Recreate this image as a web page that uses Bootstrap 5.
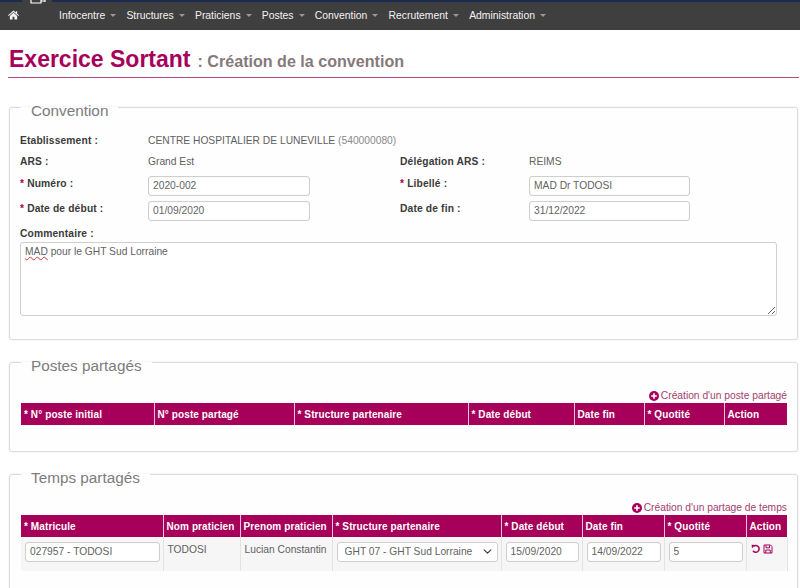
<!DOCTYPE html>
<html lang="fr"><head><meta charset="utf-8"><title>Exercice Sortant</title>
<link rel="stylesheet" href="https://cdn.jsdelivr.net/npm/bootstrap@5.3.0/dist/css/bootstrap.min.css">
<style>
html,body{height:588px;overflow:hidden}
body{font-family:"Liberation Sans",Arial,sans-serif;font-size:10.25px;color:#5f5f5f;background:#fff;line-height:1.3}
.topbar{height:30px;background:#3f3f3f;border-top:2px solid #1c2a52;position:relative;padding-left:8px;display:flex;align-items:center;color:#eee;font-size:10.4px}
.topnotch{position:absolute;left:22px;top:-2px;width:30px;height:2px;background:#3f3f3f}
.topicon{position:absolute;left:30px;top:-2px;display:block}
.homei{display:block;margin:0 40px 2px 0}
.menuitem{color:#f2f2f2;text-decoration:none;margin-right:10.2px;white-space:nowrap}
.menuitem::after{content:"";display:inline-block;margin-left:5px;vertical-align:2px;border-top:3px solid #999;border-left:3px solid transparent;border-right:3px solid transparent}
.pagehead{margin:14px 1px 0 8px;height:34px;border-bottom:1px solid #b5497f;display:flex;align-items:baseline;padding:0 0 0 1px}
.pagehead h1{font-size:23px;font-weight:700;color:#a6005a;margin:0;line-height:30px}
.pagehead small{font-size:16.1px;font-weight:700;color:#85797b;margin-left:7px}
.bloc{margin:11px 2px 0 9px;padding:0 11px;border:1px solid #dcdcdc;border-radius:3px;box-shadow:0 0 2px #e0e0e0;background:#fefefe;min-width:0}
.bloc legend{float:none;width:auto;font-size:15.3px;font-weight:400;color:#7c7c7c;margin:0;padding:6px 10px 0;line-height:17px}
.bloc1{height:244px;margin-top:18px}
.bloc2{height:101px}
.bloc3{height:140px}
.formgrid{display:grid;grid-template-columns:128px 252px 129px 161px;margin:15px 0 0 -1px;align-items:start}
.fl{font-weight:700;color:#3a3a3a;letter-spacing:.15px;white-space:nowrap}
.rowa{height:21px}.rowb{height:21px}.rowc{height:25px}.rowd{height:26px}
.pad{padding-top:1px}
.fv{white-space:nowrap}
.mut{color:#888}
.req{color:#a6005a}
.fi{display:block;width:161px;height:19.5px;padding:1px 4px;font-size:10.25px;line-height:15px;color:#626262;border:1px solid #cfcfcf;border-radius:3px;box-shadow:inset 0 0 1px #ddd;min-height:0}
.fileft{width:162px}
.cl{margin-left:-1px}
.comm{display:block;height:74px;width:757px;margin:2px 0 0 -1px;padding:2px 4px;font-size:10.25px;line-height:13px;color:#626262;border:1px solid #cfcfcf;border-radius:3px;resize:vertical;overflow:auto;min-height:0}
.wavy{text-decoration:underline wavy #c33;text-decoration-thickness:1px}
.addlink{color:#a2416f;height:15px;line-height:15px;margin:14px -1px 0 0;white-space:nowrap;display:flex;justify-content:flex-end;align-items:center;gap:2px}
.addlink svg{display:block}
.grille{table-layout:fixed;width:766px;margin:0;border-collapse:collapse;--bs-table-bg:transparent}
.grille th{background:#a6005a;color:#fff;font-weight:700;font-size:10px;height:22px;padding:0 3px;border:0;border-right:1px solid #e9c6d8;white-space:nowrap;vertical-align:middle;letter-spacing:.1px}
.grille th:last-child{border-right:0}
.grille td{background:#f6f6f6;padding:5px 3px 0 4px;height:34px;vertical-align:top;border:0;border-right:1px solid #e3e3e3;color:#5f5f5f;white-space:nowrap;overflow:hidden;font-size:10.25px;box-shadow:none}
.grille .fi,.grille .fs{width:100%}
.grille td.tx{padding:6px 3px 0 4px}
.fs{display:block;height:19.5px;padding:1px 18px 1px 7px;font-size:10.25px;line-height:15px;color:#626262;border:1px solid #cfcfcf;border-radius:3px;min-height:0;background-size:9px;background-position:right 5px center}
.acts{display:flex;gap:2px;padding-top:2px}
.p1{width:133px}.p2{width:140px}.p3{width:174px}.p4{width:106px}.p5{width:70px}.p6{width:80px}.p7{width:63px}
.q1{width:142px}.q2{width:77px}.q3{width:92px}.q4{width:169px}.q5{width:81px}.q6{width:82px}.q7{width:82px}.q8{width:41px}
</style></head><body>
<nav class="topbar">
<span class="topnotch"></span>
<svg class="topicon" width="16" height="4" viewBox="0 0 16 4"><path d="M1 0v3h10V0M11 1h4M15 0v2" fill="none" stroke="#fff" stroke-width="1.2"/></svg>
<svg class="homei" width="11" height="10" viewBox="0 0 12 10"><path d="M6 0 0 5.200l.7.8L6 1.600 11.300 6l.7-.8-2-1.700V.8H8.500v1.400zM2 6v4h3V7h2v3h3V6L6 2.600z" fill="#f2f2f2"/></svg>
<a class="menuitem" href="#">Infocentre</a>
<a class="menuitem" href="#">Structures</a>
<a class="menuitem" href="#">Praticiens</a>
<a class="menuitem" href="#">Postes</a>
<a class="menuitem" href="#">Convention</a>
<a class="menuitem" href="#">Recrutement</a>
<a class="menuitem" href="#">Administration</a>
</nav>
<header class="pagehead"><h1>Exercice Sortant</h1><small>: Création de la convention</small></header>

<fieldset class="bloc bloc1"><legend>Convention</legend>
<div class="formgrid">
<div class="fl rowa">Etablissement :</div><div class="fv">CENTRE HOSPITALIER DE LUNEVILLE <span class="mut">(540000080)</span></div><div></div><div></div>
<div class="fl rowb">ARS :</div><div class="fv">Grand Est</div><div class="fl">Délégation ARS :</div><div class="fv">REIMS</div>
<div class="fl rowc pad"><span class="req">*</span> Numéro :</div><div><input class="form-control fi fileft" value="2020-002"></div><div class="fl pad"><span class="req">*</span> Libellé :</div><div><input class="form-control fi" value="MAD Dr TODOSI"></div>
<div class="fl rowd pad"><span class="req">*</span> Date de début :</div><div><input class="form-control fi fileft" value="01/09/2020"></div><div class="fl pad">Date de fin :</div><div><input class="form-control fi" value="31/12/2022"></div>
</div>
<div class="fl cl">Commentaire :</div>
<div class="form-control comm"><span class="wavy">MAD</span> pour le GHT Sud Lorraine</div>
</fieldset>

<fieldset class="bloc bloc2"><legend>Postes partagés</legend>
<div class="addlink"><svg width="10" height="10" viewBox="0 0 10 10"><circle cx="5" cy="5" r="5" fill="#a6005a"/><path d="M5 2.200v5.600M2.200 5h5.600" stroke="#fff" stroke-width="1.600"/></svg>Création d'un poste partagé</div>
<table class="table grille t1"><colgroup><col class="p1"><col class="p2"><col class="p3"><col class="p4"><col class="p5"><col class="p6"><col class="p7"></colgroup>
<thead><tr><th>* N° poste initial</th><th>N° poste partagé</th><th>* Structure partenaire</th><th>* Date début</th><th>Date fin</th><th>* Quotité</th><th>Action</th></tr></thead></table>
</fieldset>

<fieldset class="bloc bloc3"><legend>Temps partagés</legend>
<div class="addlink"><svg width="10" height="10" viewBox="0 0 10 10"><circle cx="5" cy="5" r="5" fill="#a6005a"/><path d="M5 2.200v5.600M2.200 5h5.600" stroke="#fff" stroke-width="1.600"/></svg>Création d'un partage de temps</div>
<table class="table grille t2"><colgroup><col class="q1"><col class="q2"><col class="q3"><col class="q4"><col class="q5"><col class="q6"><col class="q7"><col class="q8"></colgroup>
<thead><tr><th>* Matricule</th><th>Nom praticien</th><th>Prenom praticien</th><th>* Structure partenaire</th><th>* Date début</th><th>Date fin</th><th>* Quotité</th><th>Action</th></tr></thead>
<tbody><tr>
<td><input class="form-control fi" value="027957 - TODOSI"></td>
<td class="tx">TODOSI</td><td class="tx">Lucian Constantin</td>
<td><select class="form-select fs"><option>GHT 07 - GHT Sud Lorraine</option></select></td>
<td><input class="form-control fi" value="15/09/2020"></td>
<td><input class="form-control fi" value="14/09/2022"></td>
<td><input class="form-control fi" value="5"></td>
<td><div class="acts">
<svg width="10" height="10" viewBox="0 0 10 10"><path d="M2.500 2.300A3.400 3.400 0 1 1 2 6.800" fill="none" stroke="#a6005a" stroke-width="1.500"/><path d="M.6 .8 4.300 .9 1 4.300z" fill="#a6005a"/></svg>
<svg width="10" height="10" viewBox="0 0 10 10"><path d="M1 1h6.500L9 2.500V9H1zM3 1.300v2.500h3.500V1.300M2.800 9V6h4.400v3" fill="none" stroke="#a6005a" stroke-width="1"/></svg>
</div></td>
</tr></tbody></table>
</fieldset>
</body></html>
